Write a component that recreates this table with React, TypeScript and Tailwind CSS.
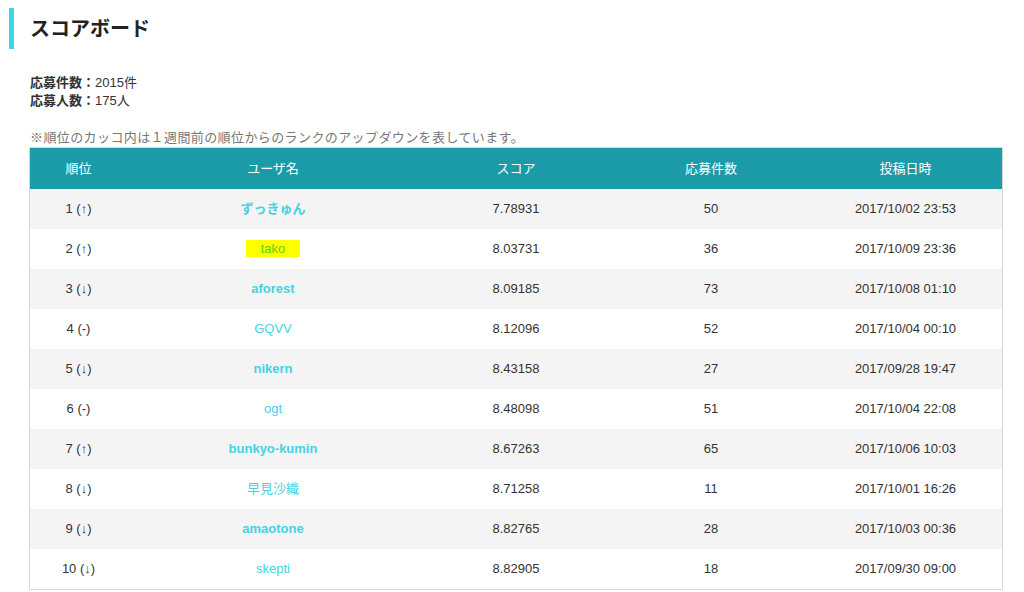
import React from "react";

type Row = {
  rank: string;
  name: string;
  score: string;
  count: number;
  date: string;
  bold?: boolean;
  mark?: boolean;
};

const rows: Row[] = [
  { rank: "1 (↑)", name: "ずっきゅん", score: "7.78931", count: 50, date: "2017/10/02 23:53", bold: true },
  { rank: "2 (↑)", name: "tako", score: "8.03731", count: 36, date: "2017/10/09 23:36", mark: true },
  { rank: "3 (↓)", name: "aforest", score: "8.09185", count: 73, date: "2017/10/08 01:10", bold: true },
  { rank: "4 (-)", name: "GQVV", score: "8.12096", count: 52, date: "2017/10/04 00:10" },
  { rank: "5 (↓)", name: "nikern", score: "8.43158", count: 27, date: "2017/09/28 19:47", bold: true },
  { rank: "6 (-)", name: "ogt", score: "8.48098", count: 51, date: "2017/10/04 22:08" },
  { rank: "7 (↑)", name: "bunkyo-kumin", score: "8.67263", count: 65, date: "2017/10/06 10:03", bold: true },
  { rank: "8 (↓)", name: "早見沙織", score: "8.71258", count: 11, date: "2017/10/01 16:26" },
  { rank: "9 (↓)", name: "amaotone", score: "8.82765", count: 28, date: "2017/10/03 00:36", bold: true },
  { rank: "10 (↓)", name: "skepti", score: "8.82905", count: 18, date: "2017/09/30 09:00" },
];

const cols = "grid-cols-[97px_292px_194px_196px_1fr]";

const App = () => {
  return (
    <div
      className="min-h-[592px] bg-white pt-2 pl-[9px] text-[#333]"
      style={{ fontFamily: "'Liberation Sans', 'Noto Sans CJK JP', sans-serif" }}
    >
      <h1 className="flex h-[41px] items-center border-l-[5px] border-[#3dd6e2] pl-4 text-[20px] font-bold text-[#222]">
        スコアボード
      </h1>

      <div className="mt-[25px] pl-[21px] text-[13px] leading-[18px]">
        <p>
          <span className="font-bold">応募件数：</span>2015件
        </p>
        <p>
          <span className="font-bold">応募人数：</span>175人
        </p>
      </div>

      <p className="mt-[19px] pl-[21px] text-[13px] leading-[18px] tracking-[0.4px] text-[#777]">
        ※順位のカッコ内は１週間前の順位からのランクのアップダウンを表しています。
      </p>

      <div className="ml-5 w-[974px] border border-[#d8d8d8] text-[13px]">
        <div className={`grid h-[41px] ${cols} items-center bg-[#1b9aa7] text-center text-white`}>
          <div>順位</div>
          <div>ユーザ名</div>
          <div>スコア</div>
          <div>応募件数</div>
          <div>投稿日時</div>
        </div>
        {rows.map((r, i) => (
          <div
            key={r.rank}
            className={`grid h-10 ${cols} items-center text-center ${
              i % 2 === 0 ? "bg-[#f4f4f4]" : "bg-white"
            }`}
          >
            <div>{r.rank}</div>
            <div>
              {r.mark ? (
                <span className="bg-[#ffff00] px-[15px] py-[1px] text-[#66cc11]">{r.name}</span>
              ) : (
                <span className={`text-[#45d2e2] ${r.bold ? "font-bold" : ""}`}>{r.name}</span>
              )}
            </div>
            <div>{r.score}</div>
            <div>{r.count}</div>
            <div>{r.date}</div>
          </div>
        ))}
      </div>
    </div>
  );
};

export default App;
